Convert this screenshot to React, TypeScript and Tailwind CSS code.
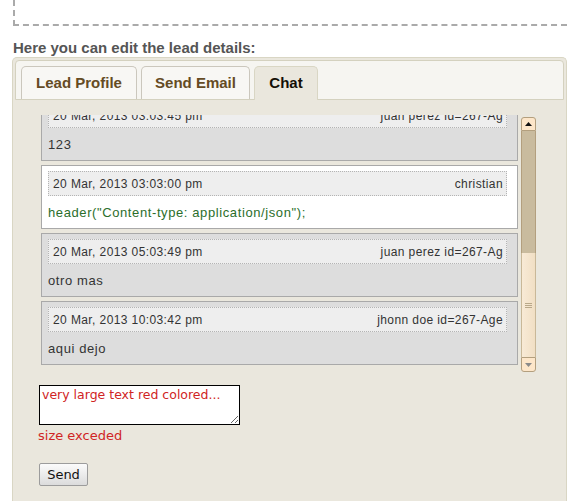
import React from "react";

type Msg = { date: string; name: string; body: string; white?: boolean; green?: boolean };

const msgs: Msg[] = [
  { date: "20 Mar, 2013 03:03:45 pm", name: "juan perez id=267-Ag", body: "123" },
  { date: "20 Mar, 2013 03:03:00 pm", name: "christian", body: 'header("Content-type: application/json");', white: true, green: true },
  { date: "20 Mar, 2013 05:03:49 pm", name: "juan perez id=267-Ag", body: "otro mas" },
  { date: "20 Mar, 2013 10:03:42 pm", name: "jhonn doe id=267-Age", body: "aqui dejo" },
];

function Message({ m }: { m: Msg }) {
  return (
    <div
      className={`h-[64px] shrink-0 border border-[#a9a9a9] pl-[6px] pr-[10px] pt-[5px] ${
        m.white ? "bg-white" : "bg-[#dddddd]"
      }`}
    >
      <div className="flex h-[25px] items-center justify-between border border-dotted border-[#b4b4b4] bg-[#eeeeee] pl-[4px] pr-[3px] text-[12px] tracking-[0.4px] text-[#333]">
        <span>{m.date}</span>
        <span>{m.name}</span>
      </div>
      <div
        className={`pt-[9px] text-[13px] leading-[15px] tracking-[0.6px] ${m.green ? "text-[#2b6e2b]" : "text-[#333]"}`}
      >
        {m.body}
      </div>
    </div>
  );
}

function Scrollbar() {
  return (
    <div className="ml-[3px] mt-[2px] flex h-[255px] w-[15px] flex-col">
      <div className="flex h-[14px] items-center justify-center rounded-t-[3px] border border-[#b39f7e] bg-[#fde6c9]">
        <svg width="7" height="4" viewBox="0 0 7 4">
          <path d="M0 4 L3.5 0 L7 4 Z" fill="#111" />
        </svg>
      </div>
      <div className="h-[122px] border-x border-[#b39f7e] bg-[#c9bb9e]" />
      <div className="flex flex-1 items-center justify-center border-x border-[#c9b898] bg-gradient-to-r from-[#f8ead6] to-[#f1dfc4]">
        <svg width="7" height="7" viewBox="0 0 7 7">
          <path d="M0 1.5 H7 M0 3.5 H7 M0 5.5 H7" stroke="#b9a889" strokeWidth="1" />
        </svg>
      </div>
      <div className="flex h-[15px] items-center justify-center rounded-b-[3px] border border-[#b39f7e] bg-[#fde6c9]">
        <svg width="7" height="4" viewBox="0 0 7 4">
          <path d="M0 0 L3.5 4 L7 0 Z" fill="#8a8a8a" />
        </svg>
      </div>
    </div>
  );
}

export default function App() {
  return (
    <div className="flex h-[501px] w-[567px] flex-col overflow-hidden bg-[#eae7dd] font-['Liberation_Sans',Arial,sans-serif]">
      <div className="shrink-0 bg-white pb-px">
        <div className="ml-[13px] h-[26px] border-b-2 border-l-2 border-dashed border-[#aaaaaa]" />
        <div className="ml-[13px] mt-[13px] text-[15px] font-bold leading-[17px] text-[#555]">
          Here you can edit the lead details:
        </div>
      </div>
      <div className="flex flex-1 bg-white">
        <div className="ml-[12px] flex w-[600px] flex-col rounded-t-[5px] border border-b-0 border-[#d9d6c4] bg-[#eae7dd] px-[2px] pt-[2px]">
          <div className="flex shrink-0 items-end gap-[4px] rounded-t-[4px] border border-[#d4d1bf] bg-[#f6f5f1] pl-[5px] pt-[5px]">
            <div className="flex h-[33px] w-[116px] items-center justify-center rounded-t-[5px] border border-b-0 border-[#cbc7bd] bg-[#f8f7f4] text-[15px] font-bold text-[#654b24]">
              Lead Profile
            </div>
            <div className="flex h-[33px] w-[109px] items-center justify-center rounded-t-[5px] border border-b-0 border-[#cbc7bd] bg-[#f8f7f4] text-[15px] font-bold text-[#654b24]">
              Send Email
            </div>
            <div className="relative -mb-px flex h-[34px] w-[64px] items-center justify-center rounded-t-[5px] border border-b-0 border-[#d9d6c4] bg-[#eae7dd] pb-px text-[15px] font-bold text-[#140f06]">
              Chat
            </div>
          </div>
          <div className="flex-1 pl-[26px] pt-[15px]">
            <div className="flex h-[257px]">
              <div className="h-[257px] w-[477px] overflow-hidden">
                <div className="-mt-[18px] flex flex-col gap-[4px]">
                  {msgs.map((m, i) => (
                    <Message key={i} m={m} />
                  ))}
                </div>
              </div>
              <Scrollbar />
            </div>
            <textarea
              readOnly
              defaultValue="very large text red colored..."
              className="-ml-[2px] mt-[13px] block h-[40px] w-[201px] border border-black bg-white px-[2px] py-[1px] font-['DejaVu_Sans',sans-serif] text-[12.5px] leading-[15px] text-[#d02424] outline-none"
            />
            <div className="-ml-[3px] mt-[3px] font-['DejaVu_Sans',sans-serif] text-[13px] leading-[15px] text-[#d02424]">
              size exceded
            </div>
            <button className="-ml-[2px] mt-[20px] h-[23px] w-[49px] rounded-[2px] border border-[#9c9c9c] bg-gradient-to-b from-[#fbfbfb] to-[#dcdcdc] font-['DejaVu_Sans',sans-serif] text-[13px] text-[#111]">
              Send
            </button>
          </div>
        </div>
      </div>
    </div>
  );
}
